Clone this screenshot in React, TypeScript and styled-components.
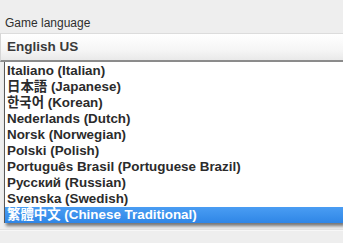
import React from 'react';
import styled, { createGlobalStyle } from 'styled-components';

const GlobalStyle = createGlobalStyle`
  html, body {
    margin: 0;
    padding: 0;
    background: #eeeeee;
    font-family: "Liberation Sans", Arial, sans-serif;
    overflow: hidden;
  }
`;

const Page = styled.div`
  width: 343px;
  height: 243px;
  padding-top: 16px;
  box-sizing: border-box;
  overflow: hidden;
`;

const Label = styled.div`
  margin-left: 5px;
  font-size: 12px;
  line-height: 14px;
  color: #2e2e2e;
`;

const Select = styled.div`
  margin-top: 3px;
  height: 26px;
  line-height: 26px;
  padding-left: 6px;
  border-left: 1px solid #d6d6d6;
  border-top: 1px solid #dcdcdc;
  border-bottom: 2px solid #8c8c8c;
  background: linear-gradient(#ffffff, #f6f6f6 60%, #e9e9e9);
  font-size: 13.5px;
  font-weight: bold;
  color: #3a3a3a;
`;

const List = styled.div`
  margin-left: 4px;
  padding-top: 1px;
  border-left: 1px solid #5a5a5a;
  background: #ffffff;
  box-shadow: 2px 3px 3px rgba(0, 0, 0, 0.5);
`;

const Item = styled.div<{ $selected?: boolean; $cjk?: string }>`
  height: 16px;
  line-height: 16px;
  padding-left: 2px;
  font-size: 13.4px;
  font-weight: bold;
  white-space: nowrap;
  font-family: "Liberation Sans", ${p => p.$cjk ? `"${p.$cjk}",` : ''} sans-serif;
  color: ${p => (p.$selected ? '#ffffff' : '#2b2b2b')};
  background: ${p => (p.$selected ? 'linear-gradient(#4a9df3, #2f86e6)' : 'transparent')};
`;

const Divider = styled.div`
  margin-top: 6px;
  border-top: 1px solid #e2e2e2;
  border-bottom: 1px solid #f7f7f7;
`;

const languages: { label: string; cjk?: string }[] = [
  { label: 'Italiano (Italian)' },
  { label: '日本語 (Japanese)', cjk: 'Noto Sans CJK JP' },
  { label: '한국어 (Korean)', cjk: 'Noto Sans CJK KR' },
  { label: 'Nederlands (Dutch)' },
  { label: 'Norsk (Norwegian)' },
  { label: 'Polski (Polish)' },
  { label: 'Português Brasil (Portuguese Brazil)' },
  { label: 'Русский (Russian)' },
  { label: 'Svenska (Swedish)' },
  { label: '繁體中文 (Chinese Traditional)', cjk: 'Noto Sans CJK TC' },
];

export default function App() {
  return (
    <>
      <GlobalStyle />
      <Page>
        <Label>Game language</Label>
        <Select>English US</Select>
        <List>
          {languages.map((lang, i) => (
            <Item key={lang.label} $cjk={lang.cjk} $selected={i === languages.length - 1}>
              {lang.label}
            </Item>
          ))}
        </List>
        <Divider />
      </Page>
    </>
  );
}
